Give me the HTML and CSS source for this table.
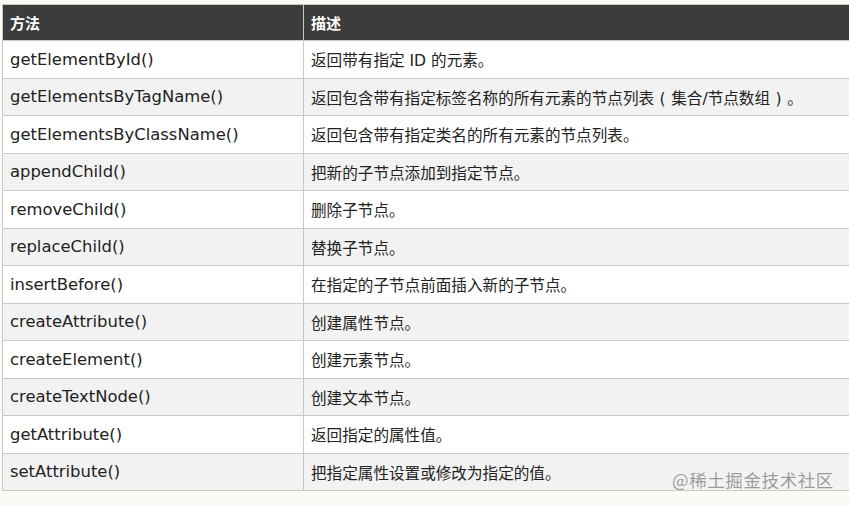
FILE: index.html
```html
<!DOCTYPE html>
<html lang="zh-CN">
<head>
<meta charset="utf-8">
<title>DOM 方法</title>
<link rel="stylesheet" href="styles.css">
</head>
<body>
<div class="page">
  <table class="ref">
    <thead>
      <tr><th class="c1">方法</th><th class="c2">描述</th></tr>
    </thead>
    <tbody>
      <tr><td>getElementById()</td><td>返回带有指定 ID 的元素。</td></tr>
      <tr><td>getElementsByTagName()</td><td>返回包含带有指定标签名称的所有元素的节点列表<span class="paren">(</span>集合/节点数组<span class="paren">)</span>。</td></tr>
      <tr><td>getElementsByClassName()</td><td>返回包含带有指定类名的所有元素的节点列表。</td></tr>
      <tr><td>appendChild()</td><td>把新的子节点添加到指定节点。</td></tr>
      <tr><td>removeChild()</td><td>删除子节点。</td></tr>
      <tr><td>replaceChild()</td><td>替换子节点。</td></tr>
      <tr><td>insertBefore()</td><td>在指定的子节点前面插入新的子节点。</td></tr>
      <tr><td>createAttribute()</td><td>创建属性节点。</td></tr>
      <tr><td>createElement()</td><td>创建元素节点。</td></tr>
      <tr><td>createTextNode()</td><td>创建文本节点。</td></tr>
      <tr><td>getAttribute()</td><td>返回指定的属性值。</td></tr>
      <tr><td>setAttribute()</td><td>把指定属性设置或修改为指定的值。</td></tr>
    </tbody>
  </table>
  <div class="watermark">@稀土掘金技术社区</div>
</div>
</body>
</html>
```

FILE: styles.css
```css
html, body {
  margin: 0;
  padding: 0;
  background: #fbfbf6;
  overflow: hidden;
}

.page {
  position: relative;
  width: 849px;
  height: 506px;
  padding: 4px 0 0 2px;
  box-sizing: border-box;
  overflow: hidden;
  font-family: "DejaVu Sans", "Noto Sans CJK SC", sans-serif;
}

.ref {
  border-collapse: collapse;
  width: 900px;
  table-layout: fixed;
  color: #222;
  font-size: 16.4px;
}

.ref th {
  background: #3c3c3c;
  color: #fff;
  font-family: "Noto Sans CJK SC", sans-serif;
  font-weight: 700;
  font-size: 15px;
  text-align: left;
  height: 35px;
  padding: 0 7px;
  border: 1px solid #c8c8c8;
}

.ref .c1 { width: 286px; }

.ref td {
  height: 37.5px;
  padding: 0 7px;
  border: 1px solid #c8c8c8;
  vertical-align: middle;
  white-space: nowrap;
  box-sizing: border-box;
}

.ref td + td {
  font-size: 15.6px;
}

.paren {
  display: inline-block;
  width: 1.1em;
  text-align: center;
}

.ref tbody tr:nth-child(odd) td { background: #ffffff; }
.ref tbody tr:nth-child(even) td { background: #f2f2f2; }

.watermark {
  position: absolute;
  left: 672px;
  top: 467px;
  font-family: "Noto Sans CJK SC", sans-serif;
  font-size: 17.5px;
  color: rgba(140, 140, 140, 0.85);
  letter-spacing: 0.6px;
}
```
